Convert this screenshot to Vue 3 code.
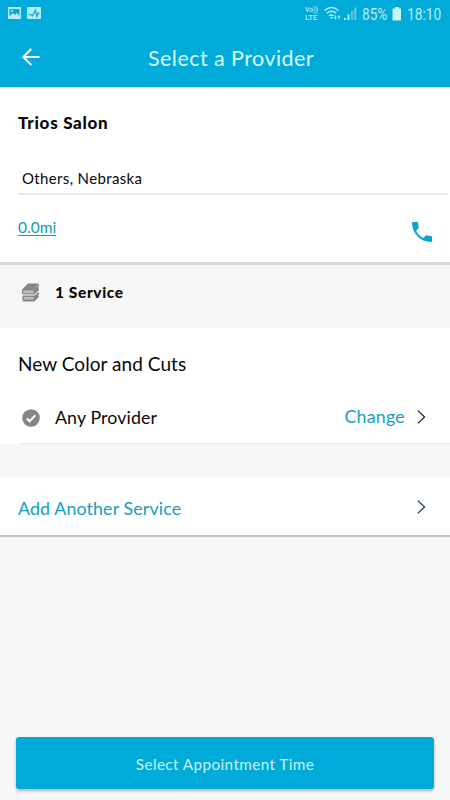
<script setup>
const salon = { name: 'Trios Salon', place: 'Others, Nebraska', distance: '0.0mi' }
</script>

<template>
  <div class="screen">
    <header>
      <div class="status">
        <svg class="notices" width="36" height="14" viewBox="0 0 36 14">
          <rect x="0" y="0" width="13" height="12" rx="1" fill="#b5ecf8" />
          <path d="M1.5 9.5V2h10v7L9 6 7.2 7.8 4.8 6z" fill="#08a8d6" />
          <circle cx="4" cy="3.8" r="1" fill="#b5ecf8" />
          <rect x="19" y="0" width="14" height="12" rx="1" fill="#b5ecf8" />
          <path d="M20.5 7.5h2.2l1.7 1.5 3.2-6 1.2 6.5 1.3-3.5 1.4 1" fill="none" stroke="#08a8d6" stroke-width="1.2" />
        </svg>
        <svg class="signals" width="56" height="18" viewBox="0 0 56 18">
          <g fill="#b5ecf8" font-family="Roboto, sans-serif" font-weight="500">
            <text x="0" y="7" font-size="6.8" textLength="13" lengthAdjust="spacingAndGlyphs">Vo))</text>
            <text x="0" y="15.4" font-size="7.4" textLength="12.5" lengthAdjust="spacingAndGlyphs">LTE</text>
          </g>
          <g fill="none" stroke="#b5ecf8" stroke-width="1.4">
            <path d="M19.5 5.5q7-6 14 0M21.7 8.3q4.8-4 9.6 0M24 11q2.6-2 5 0" />
          </g>
          <path d="M25 12h3.4l-1.7 2zM28.8 12.6h1.2v-2.2h1v2.2h1.2l-1.7 2zM32.3 12h1.2v2.3h1V12h1.2L34 10z" fill="#b5ecf8" />
          <path d="M39 15h2v-2h-2zM42.5 15h2V9.5h-2z" fill="#b5ecf8" />
          <path d="M46 15h2.2V6H46zM49 15h2.5V2.5H49z" fill="#54c5e4" />
        </svg>
        <span class="percent">85%</span>
        <svg class="battery" width="10" height="14" viewBox="0 0 10 14">
          <path d="M3 0h4v1.5h2V13.5H.5V1.5H3z" fill="#c9f4fc" />
        </svg>
        <span class="clock">18:10</span>
      </div>
      <div class="titlebar">
        <svg class="back" width="20" height="20" viewBox="0 0 20 20">
          <path d="M18.5 10H2M10.3 2 2.2 10l8.1 8" fill="none" stroke="#fff" stroke-width="1.9" />
        </svg>
        <h1><span>Select a Provider</span></h1>
      </div>
    </header>

    <section class="salon">
      <h2><span>{{ salon.name }}</span></h2>
      <p class="place"><span>{{ salon.place }}</span></p>
      <div class="contact">
        <a>{{ salon.distance }}</a>
        <svg width="20" height="20" viewBox="3 3 18 18">
          <path fill="#0aa4cf" d="M6.62 10.79c1.44 2.83 3.76 5.14 6.59 6.59l2.2-2.2c.27-.27.67-.36 1.02-.24 1.12.37 2.33.57 3.57.57.55 0 1 .45 1 1V20c0 .55-.45 1-1 1-9.39 0-17-7.61-17-17 0-.55.45-1 1-1h3.5c.55 0 1 .45 1 1 0 1.25.2 2.45.57 3.57.11.35.03.74-.25 1.02l-2.2 2.2z" />
        </svg>
      </div>
    </section>

    <div class="count">
      <svg width="19" height="19" viewBox="0 0 19 19">
        <path d="M7 .5h11L13.5 6H1.5z" fill="#858585" />
        <path d="M1.5 6h12L18 1v2l-.8 1.5L18 7l-4.5 4.5h-12Q0 8.8 1.5 6z" fill="#858585" />
        <path d="M2 12.2h11.5L18 8.5v2l-.8 1.5.8 1.8-4.5 4.7H2Q.2 15.4 2 12.2z" fill="#858585" />
        <path d="M2.3 7.6h10.2v2.3H2.3zM2.8 14h9.7v2.6H2.8z" fill="#d2d2d2" />
        <path d="M3 8.8h9.5M3 15.3h9.5" stroke="#9a9a9a" stroke-width=".7" />
        <path d="M0 12h13.3L18.5 7.4" fill="none" stroke="#f1f1f1" stroke-width=".7" />
      </svg>
      <strong>1 Service</strong>
    </div>

    <section class="service">
      <h3><span>New Color and Cuts</span></h3>
      <div class="provider">
        <svg class="check" width="18" height="18" viewBox="0 0 18 18">
          <circle cx="9" cy="9" r="8.8" fill="#858585" />
          <path d="M4.8 9.6 7.6 12.2 13.3 6.3" fill="none" stroke="#fff" stroke-width="2.1" />
        </svg>
        <span class="any">Any Provider</span>
        <span class="change">Change</span>
        <svg class="chevron" width="9" height="14" viewBox="0 0 9 14">
          <path d="M.8.6 7.6 7 .8 13.4" fill="none" stroke="#111c24" stroke-width="1.2" />
        </svg>
      </div>
    </section>

    <section class="add">
      <span class="another">Add Another Service</span>
      <svg class="chevron" width="9" height="14" viewBox="0 0 9 14">
        <path d="M.8.6 7.6 7 .8 13.4" fill="none" stroke="#16384e" stroke-width="1.2" />
      </svg>
    </section>

    <footer>
      <button><span>Select Appointment Time</span></button>
    </footer>
  </div>
</template>

<style>
body { margin: 0; }
</style>

<style scoped>
* { box-sizing: border-box; }
.screen { width: 450px; height: 800px; display: flex; flex-direction: column; background: #f7f7f7; font-family: Lato, sans-serif; color: #080808; overflow: hidden; white-space: nowrap; }
h1, h2, h3, p { margin: 0; font-weight: 400; }
svg { flex: none; display: block; }
header { height: 87px; flex: none; background: #00abd9; }
.status { height: 28px; display: flex; align-items: center; padding-left: 8px; color: #b5ecf8; font-family: Roboto, sans-serif; font-size: 16px; }
.notices { margin-right: 261px; }
.signals { margin-right: 1px; }
.percent, .clock { display: block; transform-origin: left center; transform: scaleX(.85); }
.percent { width: 30px; }
.clock { width: 38px; margin-left: 5px; transform: scaleX(.86); }
.titlebar { height: 59px; display: flex; align-items: center; padding-left: 21px; }
.back { margin-top: -2px; }
h1 { margin-left: 107px; font-size: 21.5px; line-height: 60px; letter-spacing: .45px; color: #d9fbff; }
.salon { height: 178px; flex: none; background: #fff; border-bottom: 3px solid #d9d9d9; padding-left: 18px; }
h2 { font-size: 17px; font-weight: 900; line-height: 71px; height: 70px; letter-spacing: .72px; }
.place { height: 38px; margin-right: 2px; padding-left: 4px; border-bottom: 2px solid #e9e9e9; font-size: 15px; line-height: 42px; letter-spacing: .35px; }
.contact { display: flex; justify-content: space-between; align-items: flex-start; padding: 23px 18px 0 0; }
.contact a { color: #1399ba; font-size: 15.5px; line-height: 19px; text-decoration: underline; text-underline-offset: 2px; text-decoration-thickness: 1px; }
.contact svg { margin-top: 4px; }
.count { height: 63px; flex: none; display: flex; align-items: flex-start; padding: 18px 0 0 21px; }
.count strong { margin-left: 15px; font-size: 15.5px; font-weight: 900; line-height: 19px; letter-spacing: .6px; }
.service { height: 116px; flex: none; background: #fff; padding-left: 18px; }
h3 { font-size: 19px; line-height: 72px; height: 72px; letter-spacing: .06px; }
.provider { height: 44px; display: flex; padding-left: 4px; border-bottom: 1px solid #ececec; line-height: 34px; font-size: 17.8px; }
.check { margin-top: 9px; margin-left: -.5px; }
.any { margin-left: 15.5px; letter-spacing: .12px; }
.change { margin-left: auto; line-height: 32px; color: #149dbe; letter-spacing: .25px; }
.provider .chevron { margin: 10px 24px 0 12px; }
.add { margin-top: 33px; height: 60px; flex: none; display: flex; justify-content: space-between; padding: 0 24px 0 18px; background: #fff; border-bottom: 2px solid #c6c6c6; }
.another { font-size: 17.8px; line-height: 62px; color: #149dbe; letter-spacing: .14px; }
.add .chevron { margin-top: 23px; }
footer { margin-top: auto; padding: 0 16px 11px; }
button { display: block; width: 100%; height: 52px; padding: 0; border: 0; border-radius: 3px; background: #00abd9; box-shadow: 0 2px 3px #0004; color: #c4f4ff; font: 15.3px/54px Lato, sans-serif; letter-spacing: .4px; }
</style>
